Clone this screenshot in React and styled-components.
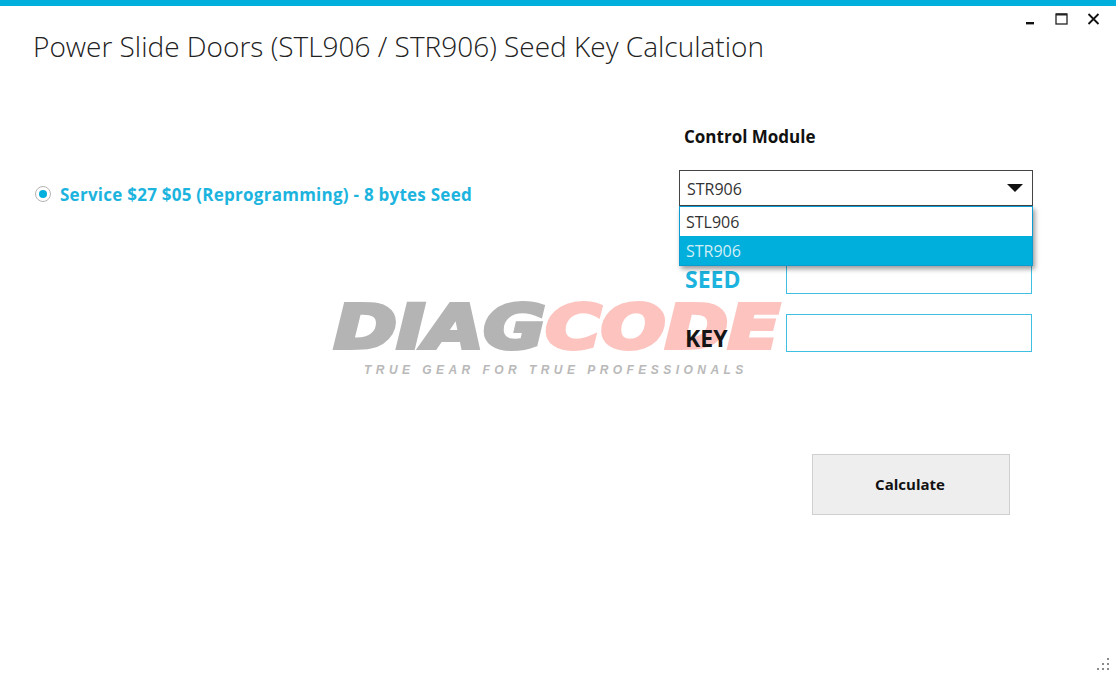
import React from "react";
import styled, { createGlobalStyle } from "styled-components";

const GlobalStyle = createGlobalStyle`
  html, body { margin: 0; padding: 0; background: #fff; }
  body { font-family: "Open Sans", "Noto Sans", sans-serif; overflow: hidden; }
`;

const Window = styled.div`
  position: relative;
  width: 1116px;
  height: 675px;
  background: #fff;
  overflow: hidden;
`;

const TopBar = styled.div`
  height: 6px;
  background: #00afdb;
`;

const Header = styled.div`
  display: flex;
  justify-content: space-between;
  align-items: flex-start;
  height: 84px;
  padding-left: 33px;
`;

const Title = styled.h1`
  margin: 21px 0 0;
  font-size: 28px;
  line-height: 38px;
  font-weight: 300;
  color: #222;
  white-space: nowrap;
`;

const WindowButtons = styled.div`
  display: flex;
  align-items: center;
  gap: 19px;
  padding: 7px 16px 0 0;
`;

const Content = styled.div`
  display: flex;
  justify-content: space-between;
`;

const Options = styled.div`
  display: flex;
  align-items: center;
  gap: 9px;
  height: 24px;
  margin: 92px 0 0 35px;
`;

const Radio = styled.span`
  display: flex;
  align-items: center;
  justify-content: center;
  width: 14px;
  height: 14px;
  border: 1px solid #b5b5b5;
  border-radius: 50%;
  &::after {
    content: "";
    width: 8px;
    height: 8px;
    border-radius: 50%;
    background: #00afdb;
  }
`;

const OptionLabel = styled.span`
  font-size: 17px;
  font-weight: 700;
  letter-spacing: 0.25px;
  color: #1cb4de;
  white-space: nowrap;
`;

const Form = styled.div`
  display: flex;
  flex-direction: column;
  width: 354px;
  margin-right: 83px;
`;

const ModuleLabel = styled.div`
  height: 22px;
  margin: 35px 0 23px 5px;
  font-size: 17px;
  line-height: 24px;
  font-weight: 700;
  color: #111;
`;

const SelectWrap = styled.div`
  position: relative;
  z-index: 2;
  margin-bottom: 50px;
`;

const SelectBox = styled.div`
  display: flex;
  align-items: center;
  justify-content: space-between;
  box-sizing: border-box;
  height: 36px;
  padding: 2px 9px 0 7px;
  border: 1px solid #444;
  font-size: 16px;
  color: #333;
`;

const Caret = styled.span`
  width: 0;
  height: 0;
  margin-top: -2px;
  border-left: 8px solid transparent;
  border-right: 8px solid transparent;
  border-top: 8px solid #111;
`;

const Menu = styled.div`
  position: absolute;
  top: 36px;
  left: 0;
  right: 0;
  box-sizing: border-box;
  border: 1px solid #0a9bd0;
  background: #fff;
  box-shadow: 2px 3px 5px rgba(0, 0, 0, 0.4);
`;

const MenuItem = styled.div`
  height: 29px;
  padding-left: 6px;
  font-size: 16px;
  line-height: 31px;
  color: ${(p) => (p.$active ? "#d2eef7" : "#333")};
  background: ${(p) => (p.$active ? "#00afdb" : "#fff")};
`;

const Field = styled.div`
  display: flex;
  align-items: center;
  justify-content: space-between;
  height: 38px;
  margin-bottom: 20px;
  padding: 0 1px 0 6px;
`;

const FieldLabel = styled.label`
  font-size: 23px;
  font-weight: 700;
  padding-top: ${(p) => (p.$dark ? "9px" : "7px")};
  color: ${(p) => (p.$dark ? "#151515" : "#1cb4de")};
  position: relative;
  z-index: 1;
`;

const FieldInput = styled.div`
  box-sizing: border-box;
  width: 246px;
  height: 38px;
  border: 1px solid #3fc0e2;
  background: #fff;
  position: relative;
  z-index: 1;
`;

const Actions = styled.div`
  display: flex;
  justify-content: flex-end;
  margin: 82px 23px 0 0;
`;

const CalcButton = styled.button`
  width: 198px;
  height: 61px;
  padding: 0 2px 1px 0;
  border: 1px solid #cfcfcf;
  background: #eeeeee;
  font-family: inherit;
  font-size: 15px;
  font-weight: 700;
  color: #111;
`;

const Watermark = styled.div`
  position: absolute;
  left: 334px;
  top: 298px;
  width: 450px;
  pointer-events: none;
`;

const LogoWord = styled.div`
  display: flex;
  height: 58px;
  align-items: center;
  font-family: "DejaVu Sans", sans-serif;
  font-weight: 700;
  font-style: italic;
  font-size: 60px;
  line-height: 58px;
  transform: scaleX(1.26);
  transform-origin: left center;
  white-space: nowrap;
`;

const LogoPart = styled.span`
  color: ${(p) => p.$color};
  -webkit-text-stroke: 4px ${(p) => p.$color};
`;

const Tagline = styled.div`
  margin: 6px 0 0 30px;
  font-family: "Liberation Sans", sans-serif;
  font-size: 12px;
  line-height: 16px;
  font-weight: 700;
  font-style: italic;
  letter-spacing: 4.45px;
  color: #b9b9b9;
  white-space: nowrap;
`;

const Grip = styled.svg`
  position: absolute;
  right: 5px;
  bottom: 5px;
`;

function Minimize() {
  return (
    <svg width="12" height="12" viewBox="0 0 12 12">
      <rect x="2" y="9" width="8" height="2.4" fill="#111" />
    </svg>
  );
}

function Maximize() {
  return (
    <svg width="13" height="12" viewBox="0 0 13 12">
      <rect x="1" y="1" width="11" height="10" fill="none" stroke="#222" strokeWidth="1.3" />
      <rect x="1" y="0.5" width="11" height="2" fill="#222" />
    </svg>
  );
}

function Close() {
  return (
    <svg width="13" height="12" viewBox="0 0 13 12">
      <path d="M1.5 1 L11.5 11 M11.5 1 L1.5 11" stroke="#111" strokeWidth="1.8" fill="none" />
    </svg>
  );
}

export default function App() {
  return (
    <Window>
      <GlobalStyle />
      <TopBar />
      <Header>
        <Title>Power Slide Doors (STL906 / STR906) Seed Key Calculation</Title>
        <WindowButtons>
          <Minimize />
          <Maximize />
          <Close />
        </WindowButtons>
      </Header>
      <Content>
        <Options>
          <Radio />
          <OptionLabel>Service $27 $05 (Reprogramming) - 8 bytes Seed</OptionLabel>
        </Options>
        <Form>
          <ModuleLabel>Control Module</ModuleLabel>
          <SelectWrap>
            <SelectBox>
              STR906
              <Caret />
            </SelectBox>
            <Menu>
              <MenuItem>STL906</MenuItem>
              <MenuItem $active>STR906</MenuItem>
            </Menu>
          </SelectWrap>
          <Field>
            <FieldLabel>SEED</FieldLabel>
            <FieldInput />
          </Field>
          <Field>
            <FieldLabel $dark>KEY</FieldLabel>
            <FieldInput />
          </Field>
          <Actions>
            <CalcButton>Calculate</CalcButton>
          </Actions>
        </Form>
      </Content>
      <Watermark>
        <LogoWord>
          <LogoPart $color="#b4b4b4">DIAG</LogoPart>
          <LogoPart $color="#fdc4bf">CODE</LogoPart>
        </LogoWord>
        <Tagline>TRUE GEAR FOR TRUE PROFESSIONALS</Tagline>
      </Watermark>
      <Grip width="14" height="12" viewBox="0 0 14 12">
        <g fill="#8a8a8a">
          <rect x="10" y="0" width="2" height="2" />
          <rect x="5" y="5" width="2" height="2" />
          <rect x="10" y="5" width="2" height="2" />
          <rect x="0" y="10" width="2" height="2" />
          <rect x="5" y="10" width="2" height="2" />
          <rect x="10" y="10" width="2" height="2" />
        </g>
      </Grip>
    </Window>
  );
}
